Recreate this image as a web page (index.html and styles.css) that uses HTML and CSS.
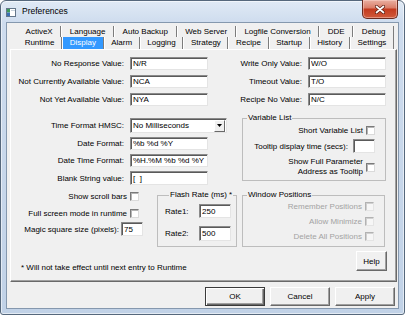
FILE: index.html
```html
<!DOCTYPE html>
<html lang="en">
<head>
  <meta charset="UTF-8">
  <title>Preferences</title>
  <link rel="stylesheet" href="styles.css">
</head>
<body>
<div class="window">
  <div class="titlebar">
    <svg class="app-icon" width="10" height="9" viewBox="0 0 10 9">
      <rect x="0.5" y="0.5" width="9" height="8" fill="#fff" stroke="#64768a"/>
      <rect x="1" y="1" width="3" height="3.5" fill="#3e9a5c"/>
      <rect x="1" y="4.5" width="3" height="3.5" fill="#3b6fb3"/>
      <rect x="5" y="2" width="4" height="1" fill="#c8d2dc"/>
    </svg>
    <span class="title">Preferences</span>
    <button class="close">
      <svg width="10" height="9" viewBox="0 0 10 9">
        <path d="M1.5 1.5L8.5 7.5M8.5 1.5L1.5 7.5" stroke="#5a1f14" stroke-width="3.2" stroke-linecap="round"/>
        <path d="M1.5 1.5L8.5 7.5M8.5 1.5L1.5 7.5" stroke="#fff" stroke-width="1.7" stroke-linecap="round"/>
      </svg>
    </button>
  </div>

  <div class="client">
    <div class="tabs">
      <div class="tab-row back">
        <div class="tab">ActiveX</div>
        <div class="tab">Language</div>
        <div class="tab">Auto Backup</div>
        <div class="tab">Web Server</div>
        <div class="tab">Logfile Conversion</div>
        <div class="tab">DDE</div>
        <div class="tab">Debug</div>
      </div>
      <div class="tab-row front">
        <div class="tab">Runtime</div>
        <div class="tab active">Display</div>
        <div class="tab">Alarm</div>
        <div class="tab">Logging</div>
        <div class="tab">Strategy</div>
        <div class="tab">Recipe</div>
        <div class="tab">Startup</div>
        <div class="tab">History</div>
        <div class="tab">Settings</div>
      </div>
    </div>

    <div class="panel">
      <div class="values">
        <label>No Response Value:</label><input class="field" value="N/R">
        <label>Write Only Value:</label><input class="field" value="W/O">
        <label>Not Currently Available Value:</label><input class="field" value="NCA">
        <label>Timeout Value:</label><input class="field" value="T/O">
        <label>Not Yet Available Value:</label><input class="field" value="NYA">
        <label>Recipe No Value:</label><input class="field" value="N/C">
      </div>

      <div class="middle">
        <div class="left-col">
          <div class="formats">
            <label>Time Format HMSC:</label>
            <div class="combo">
              <span class="combo-value">No Milliseconds</span>
              <span class="drop"><svg width="5" height="3" viewBox="0 0 5 3"><path d="M0 0h5L2.5 3z" fill="#000"/></svg></span>
            </div>
            <label>Date Format:</label><input class="field w78" value="%b %d %Y">
            <label>Date Time Format:</label><input class="field w78" value="%H.%M %b %d %Y">
            <label>Blank String value:</label><input class="field w78 tall" value="[  ]">
          </div>

          <div class="lower">
            <div class="checks">
              <div class="check-row"><span>Show scroll bars</span><span class="box"></span></div>
              <div class="check-row second"><span>Full screen mode in runtime</span><span class="box"></span></div>
              <div class="magic-row"><span>Magic square size (pixels):</span><input class="field small" value="75"></div>
            </div>
            <fieldset class="group flash">
              <legend>Flash Rate (ms) *</legend>
              <div class="rates">
                <label class="rate-label">Rate1:</label><input class="field rate" value="250">
                <label class="rate-label">Rate2:</label><input class="field rate tall" value="500">
              </div>
            </fieldset>
          </div>
        </div>

        <div class="right-col">
          <fieldset class="group varlist">
            <legend>Variable List</legend>
            <div class="check-row"><span>Short Variable List</span><span class="box"></span></div>
            <div class="input-row"><span>Tooltip display time (secs):</span><input class="field small" value=""></div>
            <div class="check-row two-line"><span>Show Full Parameter<br>Address as Tooltip</span><span class="box"></span></div>
          </fieldset>
          <fieldset class="group winpos">
            <legend>Window Positions</legend>
            <div class="check-row disabled"><span>Remember Positions</span><span class="box"></span></div>
            <div class="check-row disabled"><span>Allow Minimize</span><span class="box"></span></div>
            <div class="check-row disabled"><span>Delete All Positions</span><span class="box"></span></div>
          </fieldset>
        </div>
      </div>

      <div class="panel-foot">
        <span class="note">* Will not take effect until next entry to Runtime</span>
        <button class="btn help">Help</button>
      </div>
    </div>

    <div class="actions">
      <button class="btn default">OK</button>
      <button class="btn">Cancel</button>
      <button class="btn">Apply</button>
    </div>
  </div>
</div>
</body>
</html>
```

FILE: styles.css
```css
* {
  box-sizing: border-box;
}
body {
  margin: 0;
  font-family: "Liberation Sans", Arial, sans-serif;
  font-size: 8px;
  color: #000;
  background: #fff;
}
.window {
  width: 405px;
  height: 315px;
  padding: 0 5px 5px;
  display: flex;
  flex-direction: column;
  border: 1px solid #56687c;
  border-radius: 6px 6px 3px 3px;
  background: linear-gradient(180deg, #e0eaf5 0, #cedcee 22px, #c1d2e7 100%);
  box-shadow: inset 0 0 0 1px rgba(255, 255, 255, 0.55);
}
.titlebar {
  height: 21px;
  flex-shrink: 0;
  display: flex;
  align-items: flex-start;
}
.app-icon {
  margin-top: 7px;
}
.title {
  margin: 5px 0 0 6px;
  font-size: 8.5px;
  line-height: 10px;
}
.close {
  margin: -1px 1px 0 auto;
  width: 36px;
  height: 19px;
  padding: 0;
  display: flex;
  align-items: center;
  justify-content: center;
  border: 1px solid #6a2b20;
  border-top: none;
  border-radius: 0 0 5px 5px;
  background: linear-gradient(180deg, #eab0a2 0%, #db806b 42%, #c43b1f 52%, #d05a3b 100%);
  box-shadow: inset 0 0 0 1px rgba(255, 220, 210, 0.45);
}

.client {
  flex: 1;
  display: flex;
  flex-direction: column;
  padding-top: 3px;
  background: #f0f0f0;
  border: 1px solid #8598ae;
}

/* tabs */
.tabs {
  margin: 0 4px 0 10px;
}
.tab-row {
  display: flex;
}
.tab {
  flex: 1 1 auto;
  text-align: center;
  white-space: nowrap;
  border-left: 1px solid #fff;
  border-right: 1px solid #7c7c7c;
}
.tab-row.back .tab {
  height: 11px;
  line-height: 11px;
}
.tab-row.front .tab {
  height: 12px;
  line-height: 12px;
}
.tab-row .tab:first-child {
  border-left-color: transparent;
}
.tab.active {
  background: #3399ff;
  color: #fff;
}

/* tab page */
.panel {
  margin: 0 1px 0 3px;
  height: 233px;
  display: flex;
  flex-direction: column;
  border-top: 1px solid #fff;
  border-left: 1px solid #fff;
  border-right: 1px solid #696969;
  border-bottom: 1px solid #696969;
  box-shadow: inset -1px -1px 0 #a0a0a0;
}
label {
  text-align: right;
  white-space: nowrap;
  align-self: center;
}
.field {
  font: inherit;
  height: 13px;
  padding: 0 2px;
  color: #000;
  background: #fff;
  border: 1px solid;
  border-color: #8a8a8a #e4e4e4 #e4e4e4 #8a8a8a;
  box-shadow: inset 1px 1px 0 #5a5a5a;
  outline: none;
}
.field.tall {
  height: 14px;
}
.w78 {
  width: 78px;
}
.values {
  margin-top: 7px;
  display: grid;
  grid-template-columns: 113px 78px 88px 78px;
  grid-auto-rows: 13px;
  column-gap: 6px;
  row-gap: 5px;
}
.values .field {
  width: 100%;
}

.middle {
  display: flex;
  margin-top: 7px;
}
.left-col {
  width: 231px;
}
.formats {
  margin-top: 5px;
  display: grid;
  grid-template-columns: 113px 1fr;
  grid-template-rows: 15px 13px 13px 14px;
  column-gap: 6px;
  row-gap: 4px;
}
.combo {
  width: 97px;
  height: 15px;
  display: flex;
  align-items: center;
  padding-left: 2px;
  background: #fff;
  border: 1px solid;
  border-color: #8a8a8a #e4e4e4 #e4e4e4 #8a8a8a;
  box-shadow: inset 1px 1px 0 #5a5a5a;
}
.combo-value {
  flex: 1;
}
.drop {
  width: 11px;
  height: 12px;
  margin-right: 1px;
  display: flex;
  align-items: center;
  justify-content: center;
  background: #f0f0f0;
  border: 1px solid;
  border-color: #fff #696969 #696969 #fff;
}

.lower {
  display: flex;
  margin-top: 5px;
}
.checks {
  width: 132px;
  padding-top: 1px;
  display: flex;
  flex-direction: column;
  align-items: flex-end;
}
.checks .check-row {
  padding-right: 4px;
}
.checks .check-row.second {
  margin-top: 7px;
}
.check-row {
  height: 10px;
  display: flex;
  justify-content: flex-end;
  align-items: center;
  gap: 3px;
  white-space: nowrap;
}
.box {
  width: 9px;
  height: 9px;
  flex-shrink: 0;
  background: #fff;
  border: 1px solid;
  border-color: #7a7a7a #dadada #dadada #7a7a7a;
  box-shadow: inset 1px 1px 0 #b4b4b4;
}
.magic-row {
  margin-top: 4px;
  display: flex;
  align-items: center;
  gap: 2px;
  white-space: nowrap;
}
.field.small {
  width: 22px;
  height: 14px;
}

/* group boxes */
.group {
  margin: 0;
  min-width: 0;
  border: 1px solid #bdbdbd;
  padding: 0;
}
.group legend {
  margin-left: 4px;
  padding: 0 1px;
  line-height: 10px;
}
.flash {
  margin-left: 14px;
  width: 80px;
  height: 57px;
  padding: 4px 0 0 7px;
}
.rates {
  display: grid;
  grid-template-columns: 34px 32px;
  grid-template-rows: 14px 15px;
  row-gap: 8px;
}
.rate-label {
  text-align: left;
}
.field.rate {
  width: 32px;
  height: 14px;
}
.field.rate.tall {
  height: 15px;
}

.right-col {
  width: 144px;
}
.varlist {
  height: 68px;
  padding: 2px 10px 0 0;
}
.input-row {
  margin-top: 4px;
  display: flex;
  justify-content: flex-end;
  align-items: center;
  gap: 5px;
  white-space: nowrap;
}
.check-row.two-line {
  margin-top: 4px;
  height: 20px;
  line-height: 10px;
  text-align: right;
}
.winpos {
  margin-top: 9px;
  width: 143px;
  height: 57px;
  padding: 1px 10px 0 0;
}
.winpos .check-row + .check-row {
  margin-top: 5px;
}
.check-row.disabled {
  color: #a3a3a3;
}
.check-row.disabled .box {
  background: #f6f6f6;
  border-color: #b2b2b2 #e4e4e4 #e4e4e4 #b2b2b2;
  box-shadow: inset 1px 1px 0 #d0d0d0;
}

.panel-foot {
  display: flex;
  align-items: flex-start;
  margin-top: 4px;
}
.note {
  margin: 12px 0 0 10px;
  line-height: 10px;
}

/* buttons */
.btn {
  font: inherit;
  color: #000;
  width: 60px;
  height: 19px;
  padding: 0;
  background: #f0f0f0;
  border: 1px solid;
  border-color: #fff #696969 #696969 #fff;
  box-shadow: inset -1px -1px 0 #a0a0a0;
}
.btn.default {
  border-color: #3a3a3a;
  box-shadow: inset 1px 1px 0 #fff, inset -1px -1px 0 #696969, inset -2px -2px 0 #a0a0a0;
}
.btn.help {
  margin: 0 9px 0 auto;
  width: 31px;
  height: 20px;
}
.actions {
  display: flex;
  justify-content: flex-end;
  gap: 5px;
  margin-top: 5px;
  padding-right: 3px;
}
```
